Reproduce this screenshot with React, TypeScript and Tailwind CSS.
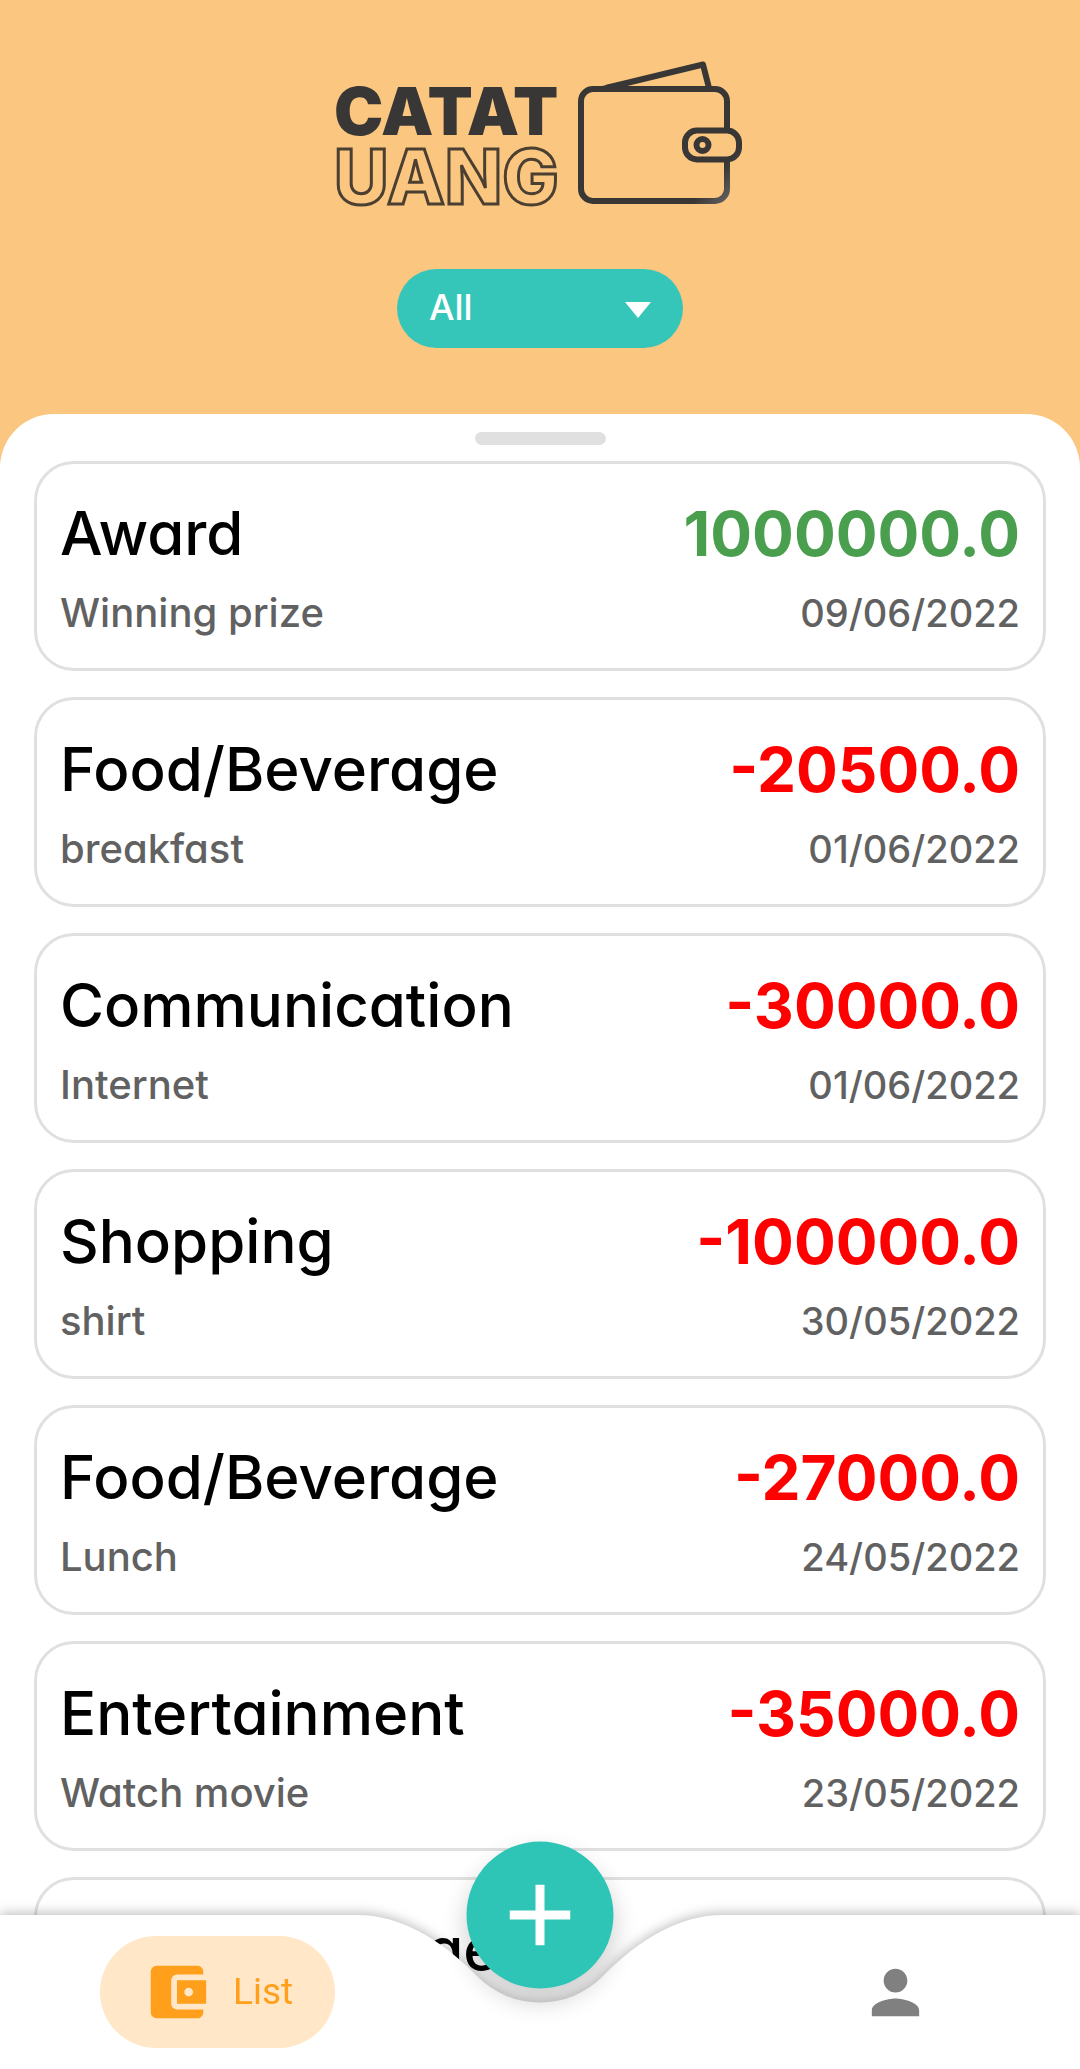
import React from "react";
import { MdAccountBalanceWallet, MdPerson } from "react-icons/md";

type Entry = { title: string; note: string; amount: string; date: string };

const entries: Entry[] = [
  { title: "Award", note: "Winning prize", amount: "1000000.0", date: "09/06/2022" },
  { title: "Food/Beverage", note: "breakfast", amount: "-20500.0", date: "01/06/2022" },
  { title: "Communication", note: "Internet", amount: "-30000.0", date: "01/06/2022" },
  { title: "Shopping", note: "shirt", amount: "-100000.0", date: "30/05/2022" },
  { title: "Food/Beverage", note: "Lunch", amount: "-27000.0", date: "24/05/2022" },
  { title: "Entertainment", note: "Watch movie", amount: "-35000.0", date: "23/05/2022" },
  { title: "Food/Beverage", note: "Dinner", amount: "-25000.0", date: "22/05/2022" },
];

function Logo() {
  return (
    <svg viewBox="0 0 440 170" className="h-[170px] w-[440px]" role="img" aria-label="Catat Uang">
      <defs>
        <linearGradient id="ink" gradientUnits="userSpaceOnUse" x1="260" y1="20" x2="412" y2="154">
          <stop offset="0.85" stopColor="#383735" />
          <stop offset="1" stopColor="#6b6a68" />
        </linearGradient>
      </defs>
      <text x="14" y="85" fontSize="66" fontWeight="900" fill="#383735" className="font-[Inter,sans-serif]">
        CATAT
      </text>
      <text
        x="14"
        y="154"
        fontSize="75"
        fontWeight="800"
        fill="none"
        stroke="#4a3f31"
        strokeWidth="3"
        className="font-[Inter,sans-serif]"
      >
        UANG
      </text>
      <g fill="none" stroke="url(#ink)" strokeWidth="6" strokeLinejoin="round">
        <path d="M407 80V51a12 12 0 0 0-12-12H273a12 12 0 0 0-12 12v88a12 12 0 0 0 12 12h122a12 12 0 0 0 12-12v-29" />
        <path d="M286 38L383 14.500L389 38" />
        <path d="M282 36L308 36L300 32Z" fill="#383735" stroke="none" />
        <rect x="365" y="80.500" width="54" height="29" rx="12" />
        <circle cx="382.500" cy="95" r="6" />
      </g>
    </svg>
  );
}

function EntryCard({ title, note, amount, date }: Entry) {
  const amountColor = amount.startsWith("-") ? "text-[#ff0000]" : "text-[#4a9f4e]";
  return (
    <li className="rounded-[40px] border-3 border-[#e0e0e0] bg-white px-[23px] pt-[30px] pb-4">
      <div className="flex items-start justify-between">
        <h2 className="text-[60px] leading-[78px] font-medium text-black">{title}</h2>
        <p className={`text-[62px] leading-[80px] font-bold ${amountColor}`}>{amount}</p>
      </div>
      <div className="flex items-center justify-between font-medium text-[#616161]">
        <p className="text-[40px] leading-[78px]">{note}</p>
        <time className="text-[38px] leading-[78px]">{date}</time>
      </div>
    </li>
  );
}

function BottomBar() {
  return (
    <nav className="fixed inset-x-0 bottom-0">
      <div className="flex h-[154px] drop-shadow-[0_-2px_6px_rgba(0,0,0,0.26)]">
        <div className="flex-1 bg-white" />
        <svg viewBox="0 0 400 154" className="h-[154px] w-[400px]" aria-hidden="true">
          <path
            d="M0 0H17C60 0 101 24 138 62A88 88 0 0 0 262 62C299 24 340 0 383 0H400V154H0Z"
            fill="#fff"
          />
        </svg>
        <div className="flex-1 bg-white" />
      </div>
      <div className="absolute inset-0 flex items-center justify-between px-[100px]">
        <button
          type="button"
          className="flex h-28 items-center gap-[21px] rounded-full bg-[#ffe7c7] px-[42px] font-[Roboto,sans-serif] text-[37px] text-[#ff9f1c]"
        >
          <MdAccountBalanceWallet size={70} />
          List
        </button>
        <button type="button" aria-label="Profile" className="flex h-28 w-[170px] items-center justify-center text-[#808080]">
          <MdPerson size={71} />
        </button>
      </div>
      <button
        type="button"
        aria-label="Add entry"
        className="absolute top-0 left-1/2 flex size-[147px] -translate-x-1/2 -translate-y-1/2 items-center justify-center rounded-full bg-[#2ec4b6] shadow-[0_12px_26px_rgba(0,0,0,0.2)]"
      >
        <svg viewBox="0 0 61 61" className="size-[61px]" aria-hidden="true">
          <path d="M26 0h9v26h26v9H35v26h-9V35H0v-9h26z" fill="#fff" />
        </svg>
      </button>
    </nav>
  );
}

export default function App() {
  return (
    <div className="flex h-screen flex-col overflow-hidden bg-[#fbc680] font-[Inter,sans-serif] [font-feature-settings:'cv11']">
      <header className="flex flex-col items-center pt-[50px] pb-[66px]">
        <Logo />
        <div className="relative mt-[49px]">
          <select
            aria-label="Category filter"
            className="h-[79px] w-[286px] appearance-none rounded-full bg-[#36c6b9] pr-16 pb-[3px] pl-8 text-[36px] font-medium text-white"
          >
            <option>All</option>
          </select>
          <svg
            viewBox="0 0 26 16"
            className="pointer-events-none absolute top-[33px] right-8 h-4 w-[26px]"
            aria-hidden="true"
          >
            <path d="M0 0H26L13 16Z" fill="#fff" />
          </svg>
        </div>
      </header>
      <main className="flex min-h-0 flex-1 flex-col rounded-t-[54px] bg-white px-[34px]">
        <div className="mx-auto mt-[18px] mb-4 h-[13px] w-[131px] shrink-0 rounded-full bg-[#e0e0e0]" />
        <ul className="flex min-h-0 flex-1 flex-col gap-[26px] overflow-y-auto [scrollbar-width:none] *:shrink-0">
          {entries.map((entry, i) => (
            <EntryCard key={i} {...entry} />
          ))}
        </ul>
      </main>
      <BottomBar />
    </div>
  );
}
